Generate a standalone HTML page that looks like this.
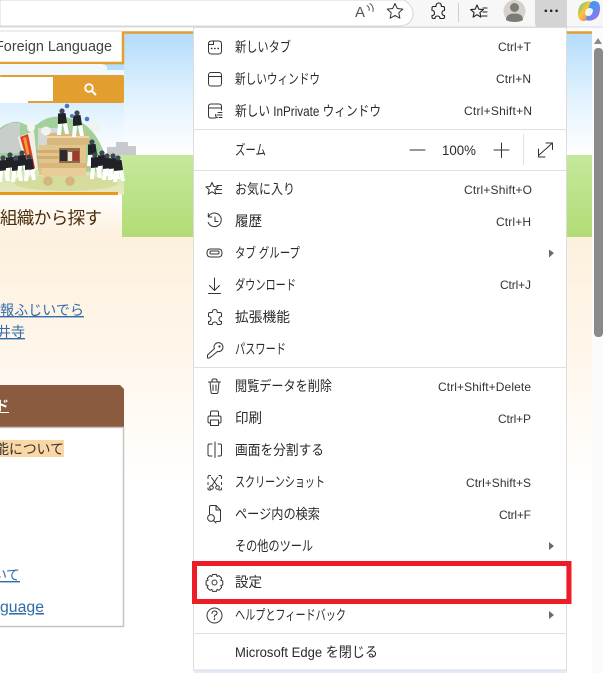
<!DOCTYPE html>
<html lang="ja"><head><meta charset="utf-8"><title>Edge menu</title>
<style>html,body{margin:0;padding:0;background:#fff;width:603px;height:673px;overflow:hidden}svg{display:block}
.m{font-family:"Liberation Sans","Noto Sans CJK JP",sans-serif;font-size:14px;fill:#2a2a2a}
.s{font-family:"Liberation Sans",sans-serif;font-size:12px;fill:#333}
.i{fill:none;stroke:#333;stroke-width:1;stroke-linecap:round;stroke-linejoin:round}
.p{font-family:"Liberation Sans","Noto Sans CJK JP",sans-serif}
.l{fill:#2f6ca8;font-size:14px;text-decoration:underline}
</style></head><body>
<svg width="603" height="673" viewBox="0 0 603 673" xmlns="http://www.w3.org/2000/svg">
<defs>
<linearGradient id="sky" x1="0" y1="0" x2="0" y2="1"><stop offset="0" stop-color="#b3dcfb"/><stop offset=".55" stop-color="#e3f3fe"/><stop offset="1" stop-color="#fff"/></linearGradient>
<linearGradient id="gr" x1="0" y1="0" x2="0" y2="1"><stop offset="0" stop-color="#c5e89b"/><stop offset="1" stop-color="#b2dc76"/></linearGradient>
<linearGradient id="gd" x1="0" y1="0" x2="0" y2="1"><stop offset="0" stop-color="#c5e6a0"/><stop offset=".6" stop-color="#d8e8b0"/><stop offset="1" stop-color="#ece6c4"/></linearGradient>
<linearGradient id="pe" x1="0" y1="0" x2="0" y2="1"><stop offset="0" stop-color="#fdf0de"/><stop offset=".5" stop-color="#fff7ec"/><stop offset="1" stop-color="#fff"/></linearGradient>
<linearGradient id="tb" x1="0" y1="0" x2="0" y2="1"><stop offset="0" stop-color="#fff"/><stop offset="1" stop-color="#fdf0de"/></linearGradient>
<linearGradient id="c1" x1="0" y1="0" x2="1" y2="1"><stop offset="0" stop-color="#1fa8ee"/><stop offset=".55" stop-color="#5f8cf0"/><stop offset="1" stop-color="#c05fe0"/></linearGradient>
<linearGradient id="c2" x1="0" y1="0" x2="1" y2="1"><stop offset="0" stop-color="#3cc88c"/><stop offset=".45" stop-color="#f7c83a"/><stop offset="1" stop-color="#f0607a"/></linearGradient>
<g id="f"><circle cx="0" cy="0" r="2.600" fill="#3c4757"/><path d="M-4 2.500L3.500 2L5 12L-4 13Z" fill="#202228"/><path d="M-4 13L0 13L-1 24L-5 24ZM1 13L5 12L7 23L3 23Z" fill="#fff"/></g>
</defs>

<!-- page -->
<rect width="603" height="673" fill="#fff"/>
<rect x="0" y="237" width="594" height="250" fill="url(#pe)"/>
<rect x="124" y="33" width="470" height="122" fill="url(#sky)"/>
<rect x="0" y="64" width="124" height="91" fill="url(#sky)"/>
<rect x="122" y="155" width="472" height="82" fill="url(#gr)"/>
<rect x="0" y="155" width="124" height="40" fill="url(#gd)"/>
<rect x="0" y="30" width="122" height="2" fill="#eee"/>
<rect x="0" y="32" width="122" height="30" fill="#fff"/>
<path d="M0 63H123V32.500H594" fill="none" stroke="#e29f2f" stroke-width="2.500"/>
<text x="-5" y="51" class="p" font-size="14.500" fill="#444" textLength="117" lengthAdjust="spacingAndGlyphs">Foreign Language</text>
<path d="M0 64H100Q108 64 107 70H124V75H0Z" fill="#f1f8fe"/>
<rect x="0" y="75" width="124" height="28" rx="2" fill="#e29f2f"/>
<rect x="0" y="77" width="53" height="24" fill="#fff"/>
<rect x="0" y="77" width="28" height="26" fill="#fff"/>
<circle cx="89" cy="88" r="3.800" fill="none" stroke="#fff" stroke-width="1.800"/><path d="M92 91l4 4" stroke="#fff" stroke-width="2.200"/>

<!-- festival float -->
<path d="M0 170V128Q14 118 24 124Q35 128 40 122Q55 112 75 120Q95 125 106 158L108 172Z" fill="#a3d09a"/>
<path d="M0 153V130L10 123H20V153Z" fill="#c8cec9"/>
<path d="M38 155V128H60V155Z" fill="#d3dad5"/>
<path d="M107 155V147H116V142H128V146H136V155Z" fill="#c6c9cd"/>
<ellipse cx="66" cy="183" rx="52" ry="8" fill="#d6dc9e"/>
<circle cx="48" cy="181" r="4.800" fill="#d6b67c"/><circle cx="70" cy="181" r="4.800" fill="#d6b67c"/>
<path d="M47 133H88L90 145H47Z" fill="#d8b87e"/>
<rect x="46" y="136" width="43" height="2" fill="#efd8ab"/>
<rect x="39" y="145" width="47" height="30" fill="#e3c48c"/>
<rect x="35" y="150" width="24" height="3" fill="#cfae74"/><rect x="35" y="156" width="24" height="3" fill="#cfae74"/>
<rect x="59" y="148" width="21" height="15" fill="#8d6d47"/>
<rect x="60" y="150" width="7" height="11" fill="#2c2c30"/><rect x="68" y="152" width="4" height="9" fill="#efe5d0"/><rect x="73" y="151" width="6" height="10" fill="#a13a2b"/>
<rect x="35" y="163" width="55" height="5" rx="2" fill="#d9b67a"/>
<rect x="42" y="168" width="44" height="8" rx="2" fill="#e9cd98"/>
<path d="M18 137L34 131L38 170L33 172L28 178Z" fill="#f3efe8"/>
<path d="M20 137L28 134L35 168L30 171Z" fill="#dd3f2a"/><path d="M23 138L26 137L32 167L30 168Z" fill="#f2a02d"/>
<ellipse cx="46" cy="131" rx="5" ry="4.500" fill="#f2f2ee"/><ellipse cx="95" cy="127" rx="6" ry="4" fill="#f2f2ee"/><ellipse cx="31" cy="127" rx="4" ry="5" fill="#f4f4f0"/>
<use href="#f" x="62" y="111"/><use href="#f" x="77" y="113"/>
<circle cx="67" cy="106" r="2.300" fill="#4a78c0"/><circle cx="87" cy="119" r="2.300" fill="#4a78c0"/><circle cx="72" cy="116" r="2" fill="#4a78c0"/>
<use href="#f" x="92" y="142"/>
<use href="#f" x="95" y="155"/><use href="#f" x="102" y="153"/><use href="#f" x="107" y="156"/><use href="#f" x="113" y="156"/><use href="#f" x="118" y="158"/>
<use href="#f" x="3" y="158"/><use href="#f" x="10" y="155"/><use href="#f" x="16" y="158"/><use href="#f" x="22" y="153"/><use href="#f" x="29" y="157"/>

<!-- tab -->
<path d="M0 193.500H118Q122 193.500 122 198V237H0Z" fill="url(#tb)"/>
<path d="M0 193.500H118" stroke="#e69a18" stroke-width="3"/>
<text x="0" y="224" class="p" font-size="17.500" fill="#4c2f0d" textLength="102">組織から探す</text>

<!-- links -->
<text x="0" y="315" class="p l" textLength="84">報ふじいでら</text>
<text x="-3" y="337" class="p l" textLength="28">井寺</text>

<!-- panel -->
<path d="M0 385H120L124 389V427H0Z" fill="#8a5b3e"/>
<rect x="-2" y="427.500" width="125.500" height="199" fill="#fff" stroke="#c4c4c4" stroke-width="1.500"/>
<text x="-5" y="411" class="p" font-size="14" font-weight="bold" fill="#fff">ド</text><rect x="0" y="412" width="9" height="1" fill="#fff"/>
<rect x="0" y="440" width="64" height="17" fill="#fbd7a6"/>
<text x="-5" y="454" class="p" font-size="14" fill="#333" textLength="69">能について</text>
<text x="-7" y="580" class="p l" textLength="27">いて</text>
<text x="0" y="612" class="p l" style="font-size:15.500px" textLength="44" lengthAdjust="spacingAndGlyphs">guage</text>

<!-- scrollbar -->
<rect x="592" y="28" width="11" height="645" fill="#fbfbfb"/>
<path d="M594 44L598 38L602 44Z" fill="#8a8a8a"/>
<rect x="594" y="48" width="9" height="289" rx="4" fill="#8a8a8a"/>

<!-- toolbar -->
<rect x="0" y="0" width="603" height="27" fill="#f7f7f7"/>
<path d="M0 0H404Q413 6 413 13Q413 26 398 26H0Z" fill="#fff" stroke="#d6d6d6"/>
<rect x="0" y="26.500" width="603" height="1" fill="#d9d9d9"/>
<text x="355" y="17" font-family="Liberation Sans" font-size="15" fill="#555">A</text>
<path d="M367 5.500q3 2 2 5M370 3.500q4 3 3 8" class="i" style="stroke:#555"/>
<path d="M395 3.500l2.300 5 5.500.6-4 3.700 1.100 5.400-4.900-2.800-4.900 2.800 1.100-5.400-4-3.700 5.500-.6z" class="i"/>
<path d="M433.500 6.500H436q0-3.500 2.700-3.500t2.700 3.500H443q1.500 0 1.500 1.500v2.500q-2.500 0-2.500 2.500t2.500 2.500V17q0 1.500-1.500 1.500H440q0-2.500-2.500-2.500t-2.500 2.500H433.500q-1.500 0-1.500-1.500V15.500q2.500 0 2.500-2.500t-2.500-2.500V8q0-1.500 1.500-1.500Z" class="i" style="stroke-width:1.100;stroke:#222"/>
<rect x="458" y="3" width="1" height="19" fill="#cfcfcf"/>
<path d="M477 5l1.800 4.200 4.600.4-3.500 3 1 4.500-3.900-2.400-3.900 2.400 1-4.500-3.500-3 4.600-.4zM483 8h4M483 12h4M482 16h5" class="i" style="stroke-width:1.100;stroke:#222"/>
<circle cx="514.500" cy="11" r="11" fill="#d5d2cd"/>
<circle cx="514.500" cy="7.500" r="4.500" fill="#7e7a76"/>
<path d="M506 20q0-6.500 8.500-6.500t8.500 6.500q-3 2-8.500 2t-8.500-2z" fill="#7e7a76"/>
<path d="M535 0H567V27H539Q535 27 535 23Z" fill="#d4d4d4"/>
<circle cx="545.800" cy="10.800" r="1.300" fill="#222"/><circle cx="551.200" cy="10.800" r="1.300" fill="#222"/><circle cx="556.600" cy="10.800" r="1.300" fill="#222"/>
<path d="M578 14q0-9 6-11.500 4-2 8-.5l-2.500 11q-1 8-5.500 8-6 0-6-7z" fill="url(#c2)"/>
<path d="M600 8q0 9-6 11.500-4 2-8 .5l2.500-11q1-8 5.500-8 6 0 6 7z" fill="url(#c1)"/>
<path d="M585 13q1-5 4.500-5t3.500 3q-1 5-4.500 5t-3.500-3z" fill="#fff" opacity=".9"/>

<!-- menu -->
<rect x="193.500" y="27.500" width="373" height="642.500" fill="#fff" stroke="#dcdcdc"/>
<rect x="194" y="670.500" width="373" height="2.500" fill="#e2edf9"/>
<g fill="#e0e0e0"><rect x="194" y="129" width="372" height="1"/><rect x="194" y="170" width="372" height="1"/><rect x="194" y="367" width="372" height="1"/><rect x="194" y="633" width="372" height="1"/></g>
<rect x="523" y="134" width="1" height="31" fill="#e0e0e0"/>

<g class="m">
<text x="235" y="52" textLength="56" lengthAdjust="spacingAndGlyphs">新しいタブ</text>
<text x="235" y="84" textLength="85" lengthAdjust="spacingAndGlyphs">新しいウィンドウ</text>
<text x="235" y="116" textLength="146" lengthAdjust="spacingAndGlyphs">新しい InPrivate ウィンドウ</text>
<text x="235" y="155" textLength="31" lengthAdjust="spacingAndGlyphs">ズーム</text>
<text x="235" y="194" textLength="60" lengthAdjust="spacingAndGlyphs">お気に入り</text>
<text x="235" y="226" textLength="27" lengthAdjust="spacingAndGlyphs">履歴</text>
<text x="235" y="258" textLength="65" lengthAdjust="spacingAndGlyphs">タブ グループ</text>
<text x="235" y="290" textLength="61" lengthAdjust="spacingAndGlyphs">ダウンロード</text>
<text x="235" y="322" textLength="55" lengthAdjust="spacingAndGlyphs">拡張機能</text>
<text x="235" y="354" textLength="51" lengthAdjust="spacingAndGlyphs">パスワード</text>
<text x="235" y="391" textLength="97" lengthAdjust="spacingAndGlyphs">閲覧データを削除</text>
<text x="235" y="423" textLength="27" lengthAdjust="spacingAndGlyphs">印刷</text>
<text x="235" y="455" textLength="89" lengthAdjust="spacingAndGlyphs">画面を分割する</text>
<text x="235" y="487" textLength="90" lengthAdjust="spacingAndGlyphs">スクリーンショット</text>
<text x="235" y="519" textLength="85" lengthAdjust="spacingAndGlyphs">ページ内の検索</text>
<text x="235" y="551" textLength="78" lengthAdjust="spacingAndGlyphs">その他のツール</text>
<text x="235" y="587" textLength="27" lengthAdjust="spacingAndGlyphs">設定</text>
<text x="235" y="620" textLength="111" lengthAdjust="spacingAndGlyphs">ヘルプとフィードバック</text>
<text x="235" y="657" textLength="143" lengthAdjust="spacingAndGlyphs">Microsoft Edge を閉じる</text>
<text x="442" y="155" textLength="34" lengthAdjust="spacingAndGlyphs">100%</text>
</g>
<g class="s">
<text x="498" y="51" textLength="33">Ctrl+T</text>
<text x="496" y="83" textLength="35">Ctrl+N</text>
<text x="464" y="115" textLength="68">Ctrl+Shift+N</text>
<text x="464" y="194" textLength="68">Ctrl+Shift+O</text>
<text x="496" y="226" textLength="35">Ctrl+H</text>
<text x="500" y="289" textLength="31">Ctrl+J</text>
<text x="438" y="391" textLength="93">Ctrl+Shift+Delete</text>
<text x="498" y="423" textLength="33">Ctrl+P</text>
<text x="466" y="487" textLength="65">Ctrl+Shift+S</text>
<text x="499" y="519" textLength="32">Ctrl+F</text>
</g>

<!-- zoom controls -->
<path d="M410 150H425M494 150H509M501.500 143V157.500" class="i"/>
<path d="M538.500 155.500L552.500 143M546 143H552.500V149.500M538.500 149V157H545" class="i"/>

<!-- arrows -->
<g fill="#6a6a6a"><path d="M549 249.500L554 253L549 257.500Z"/><path d="M549 542L554 546L549 550Z"/><path d="M549 611L554 615L549 619Z"/></g>

<!-- icons -->
<g class="i">
<path d="M208.500 44q0-3 3-3h7q3 0 3 3v7q0 3-3 3h-7q-3 0-3-3zM208.500 44.500h5v-3"/>
<path d="M211.500 48.500h.4M214.700 48.500h.4M218 48.500h.4" style="stroke-width:1.400"/>
<rect x="208.500" y="72.500" width="13" height="13.500" rx="2.500"/><path d="M208.500 76.500h13"/>
<path d="M216 118h-5q-2.500 0-2.500-2.500v-9q0-2.500 2.500-2.500h8q2.500 0 2.500 2.500V110M208.500 108h13"/>
<path d="M218 112.500h4M217 115h5M219 117.500h3M215.500 114.500q0 3 2 3"/>
<path d="M212 182.500l1.800 4 4.300.4-3.300 2.900 1 4.300-3.800-2.300-3.800 2.300 1-4.300-3.300-2.900 4.300-.4zM217 185.500h4.500M216.500 189.500h5M215.500 193.500h6"/>
<path d="M208.500 216.500a6.800 6.800 0 1 1-.3 6M208.300 213.500v3.500h3.500M215 217v4.500h3"/>
<path d="M210.500 249h8q3.500 0 3.500 4t-3.500 4h-8q-3.500 0-3.500-4t3.500-4z"/><rect x="210" y="251" width="9" height="3" rx="1"/>
<path d="M214.500 278v12M209.500 285.500l5 5 5-5M208.500 293.500h12"/>
<path d="M210 312.500h2.300q0-3 2.500-3t2.500 3h2.700q1.500 0 1.500 1.500v2.500q-2.500 0-2.500 2.500t2.500 2.500V323q0 1.500-1.500 1.500h-2.700q0-2.500-2.500-2.500t-2.500 2.500H210q-1.500 0-1.500-1.500v-1.500q2.500 0 2.500-2.500t-2.500-2.500V314q0-1.500 1.500-1.500Z"/>
<path d="M214 347.500a4.500 4.500 0 1 1 3.500 4L209.500 358h-2v-3l7-6.500Q214 348 214 347.500z"/><circle cx="219.500" cy="346.500" r=".6"/>
<path d="M208.500 382h12M212 382v-1.500q0-1.500 1.500-1.500h2q1.500 0 1.500 1.500V382M210 382l1 10q.1 1.500 1.500 1.500h4q1.400 0 1.500-1.500l1-10M213 385v5.500M216 385v5.500"/>
<path d="M210.500 416v-3.500q0-1.500 1.500-1.500h5q1.500 0 1.500 1.500V416M210.500 423h-1q-1.500 0-1.500-1.500v-4q0-1.500 1.500-1.500h10q1.500 0 1.500 1.500v4q0 1.500-1.500 1.500h-1M210.500 420h8v5.500h-8z"/>
<path d="M212 444h-2.500q-1.500 0-1.500 1.500v9q0 1.500 1.500 1.500h2.500M218 444h2q1.500 0 1.500 1.500v9q0 1.500-1.500 1.500h-2M215 442v15.500"/>
<path d="M210.500 475.500h-1q-1.500 0-1.500 1.500v1.500M208 482.500v2M208 488v1q0 1 1.500 1h1M219 475.500h1q1.500 0 1.500 1.500v1.500M221.500 482.500v2M221.500 488v1q0 1-1.500 1h-1"/>
<path d="M211.500 477.500l5.500 8M217.500 477.500l-5.500 8"/><circle cx="211.500" cy="487.500" r="1.800"/><circle cx="217.500" cy="487.500" r="1.800"/>
<path d="M209.500 514v-7q0-1.500 1.500-1.500h5l4.500 4.500v10q0 1.500-1.500 1.500h-3M216 505.500V510h4.500"/><circle cx="211" cy="518" r="3.400"/><path d="M213.500 520.500l2.500 2.500"/>
<g transform="translate(214.500 582.500)"><path d="M-2 -8h4l.5 2 2-.9 2.700 2.700-.9 2 2 .7v4l-2 .5.9 2-2.700 2.800-2-.9-.5 2h-4l-.6-2-2 .9-2.700-2.800.9-2-2-.5v-4l2-.7-.9-2L-4.600 -6.900l2 .9z"/><circle r="2.500"/></g>
<circle cx="214.500" cy="615.500" r="7.500"/><path d="M212 613.500q0-2.500 2.500-2.500t2.500 2q0 1.500-1.500 2t-1 2"/><path d="M214.500 619v.4" style="stroke-width:1.400"/>
</g>

<!-- highlight -->
<rect x="194.500" y="563.500" width="374.500" height="38" fill="none" stroke="#ee1c27" stroke-width="5"/>
</svg>
</body></html>
